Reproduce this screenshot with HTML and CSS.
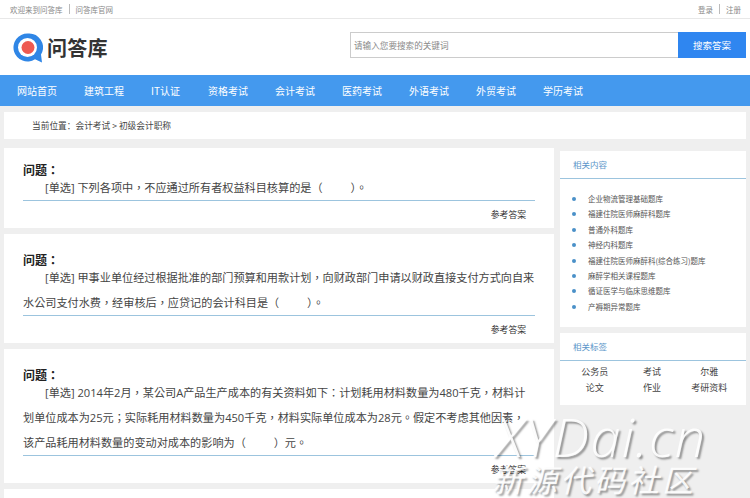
FILE: index.html
```html
<!DOCTYPE html>
<html lang="zh-CN">
<head>
    <meta charset="UTF-8">
    <meta name="viewport" content="width=device-width, initial-scale=1.0">
    <title>问答库</title>
    <link rel="stylesheet" href="styles.css">
</head>
<body>
    <div class="topbar">
        <div class="topbar-links">
            <a>欢迎来到问答库</a>
            <span class="sep"></span>
            <a>问答库官网</a>
        </div>
        <div class="topbar-links">
            <a>登录</a>
            <span class="sep"></span>
            <a>注册</a>
        </div>
    </div>

    <div class="header">
        <div class="logo">
            <svg class="logo-icon" width="30" height="30" viewBox="0 0 30 30">
                <path d="M14.5 0.5 a14 14 0 1 0 7.5 25.8 l7 3.2 l-1-8 a14 14 0 0 0 -13.500-21z" fill="#2f86e6"/>
                <circle cx="14.500" cy="14.500" r="9.500" fill="#fff"/>
                <circle cx="15" cy="14.500" r="6.500" fill="#ee5a52"/>
            </svg>
            <span class="logo-text">问答库</span>
        </div>
        <div class="search">
            <div class="search-input">请输入您要搜索的关键词</div>
            <button class="search-btn">搜索答案</button>
        </div>
    </div>

    <div class="nav">
        <a>网站首页</a>
        <a>建筑工程</a>
        <a class="short">IT认证</a>
        <a>资格考试</a>
        <a>会计考试</a>
        <a>医药考试</a>
        <a>外语考试</a>
        <a>外贸考试</a>
        <a>学历考试</a>
    </div>

    <div class="crumb">当前位置：会计考试 &gt; 初级会计职称</div>

    <div class="content">
        <div class="questions">
            <div class="card first">
                <div class="q-title">问题：</div>
                <div class="q-text">[单选] 下列各项中，不应通过所有者权益科目核算的是（&emsp;&emsp;&ensp;）。</div>
                <div class="q-answer">参考答案</div>
            </div>
            <div class="card">
                <div class="q-title">问题：</div>
                <div class="q-text">[单选] 甲事业单位经过根据批准的部门预算和用款计划，向财政部门申请以财政直接支付方式向自来水公司支付水费，经审核后，应贷记的会计科目是（&emsp;&emsp;&ensp;）。</div>
                <div class="q-answer">参考答案</div>
            </div>
            <div class="card">
                <div class="q-title">问题：</div>
                <div class="q-text">[单选] 2014年2月，某公司A产品生产成本的有关资料如下：计划耗用材料数量为480千克，材料计<br>划单位成本为25元；实际耗用材料数量为450千克，材料实际单位成本为28元。假定不考虑其他因素，<br>该产品耗用材料数量的变动对成本的影响为（&emsp;&emsp;&ensp;）元。</div>
                <div class="q-answer">参考答案</div>
            </div>
            <div class="card"></div>
        </div>

        <div class="sidebar">
            <div class="side-box">
                <div class="side-title">相关内容</div>
                <ul class="side-list">
                    <li>企业物流管理基础题库</li>
                    <li>福建住院医师麻醉科题库</li>
                    <li>普通外科题库</li>
                    <li>神经内科题库</li>
                    <li>福建住院医师麻醉科(综合练习)题库</li>
                    <li>麻醉学相关课程题库</li>
                    <li>循证医学与临床思维题库</li>
                    <li>产褥期异常题库</li>
                </ul>
            </div>
            <div class="side-box">
                <div class="side-title">相关标签</div>
                <div class="tags">
                    <a>公务员</a>
                    <a>考试</a>
                    <a>尔雅</a>
                    <a>论文</a>
                    <a>作业</a>
                    <a>考研资料</a>
                </div>
            </div>
        </div>
    </div>

    <div class="watermark">
        <div class="wm-en">XYDai.cn</div>
        <div class="wm-cn">新源代码社区</div>
    </div>
</body>
</html>
```

FILE: styles.css
```css
* {
    box-sizing: border-box;
}
html, body {
    height: 498px;
    overflow: hidden;
}
body {
    margin: 0;
    position: relative;
    font-family: "Noto Sans CJK SC", "Noto Sans", sans-serif;
    background: #efefef;
    color: #444;
}
.topbar {
    height: 19px;
    padding: 0 9px 0 10px;
    display: flex;
    justify-content: space-between;
    align-items: center;
    background: #fff;
    border-bottom: 1px solid #e8e8e8;
    font-size: 7.500px;
    color: #888;
}
.topbar-links {
    display: flex;
    align-items: center;
    gap: 6px;
}
.sep {
    width: 1px;
    height: 10px;
    background: #bbb;
}
.header {
    height: 56px;
    padding: 13px 4px 0 13px;
    display: flex;
    justify-content: space-between;
    align-items: flex-start;
    background: #fff;
}
.logo {
    display: flex;
    align-items: center;
    gap: 4px;
    margin-top: 1px;
}
.logo-text {
    font-size: 20px;
    line-height: 30px;
    font-weight: 700;
    color: #333;
    letter-spacing: 0.300px;
}
.search {
    display: flex;
    height: 26px;
}
.search-input {
    width: 328px;
    padding-left: 3px;
    border: 1px solid #ccc;
    border-right: none;
    font-size: 8.600px;
    line-height: 24px;
    color: #888;
}
.search-btn {
    width: 68px;
    border: none;
    padding: 0;
    background: #2f86f0;
    color: #fff;
    font-family: inherit;
    font-size: 9.500px;
}
.nav {
    height: 31px;
    padding-left: 17px;
    display: flex;
    align-items: center;
    gap: 27px;
    background: #4499ee;
    color: #fff;
    font-size: 10px;
}
.nav a {
    width: 40px;
}
.nav .short {
    width: 30px;
}
.crumb {
    height: 27px;
    margin: 6px 4px 0 4px;
    padding-left: 28px;
    background: #fff;
    font-size: 8.700px;
    line-height: 27px;
    color: #444;
}
.content {
    display: flex;
    align-items: flex-start;
    gap: 6px;
    margin: 9px 4px 0 4px;
}
.questions {
    width: 550px;
    display: flex;
    flex-direction: column;
    gap: 6px;
}
.card {
    min-height: 80px;
    padding: 18px 19px 0 19px;
    background: #fff;
}
.card.first {
    padding-top: 14px;
}
.q-title {
    font-family: "Noto Sans CJK TC", "Noto Sans CJK SC", sans-serif;
    font-feature-settings: "locl" 0;
    font-size: 12px;
    line-height: 16px;
    font-weight: 700;
    color: #222;
}
.q-text {
    margin-top: -3px;
    border-bottom: 1px solid #9cc4de;
    font-family: "Open Sans", "Noto Sans CJK TC", "Noto Sans CJK SC", sans-serif;
    font-feature-settings: "locl" 0;
    font-size: 11.150px;
    line-height: 25px;
    text-indent: 22px;
    color: #444;
}
.q-answer {
    height: 27px;
    padding-right: 9px;
    text-align: right;
    font-size: 8.800px;
    line-height: 27px;
    color: #333;
}
.sidebar {
    width: 186px;
    margin-top: 3px;
    display: flex;
    flex-direction: column;
    gap: 6px;
}
.side-box {
    background: #fff;
}
.side-title {
    height: 28px;
    padding-left: 13px;
    border-bottom: 1px solid #9cc4de;
    font-size: 8.500px;
    line-height: 27px;
    color: #5b95c9;
}
.side-list {
    list-style: none;
    margin: 0;
    padding: 12px 0 13px 28px;
}
.side-list li {
    position: relative;
    font-size: 7.500px;
    line-height: 15.400px;
    color: #555;
}
.side-list li::before {
    content: "";
    position: absolute;
    left: -16px;
    top: 6px;
    width: 4px;
    height: 4px;
    border-radius: 50%;
    background: #4a90c8;
}
.tags {
    padding: 3px 8px 9px 6px;
    display: grid;
    grid-template-columns: repeat(3, 1fr);
    text-align: center;
    font-size: 9px;
    line-height: 16px;
    color: #444;
}
.watermark {
    position: absolute;
    left: 492px;
    top: 404px;
    width: 230px;
    color: rgba(255, 255, 255, 0.92);
    text-shadow: 2px 2px 2px rgba(0, 0, 0, 0.4);
}
.wm-en {
    padding-left: 4px;
    font-family: "Open Sans", sans-serif;
    font-style: italic;
    font-size: 54px;
    line-height: 64px;
    font-weight: 300;
    letter-spacing: 1.400px;
}
.wm-cn {
    margin-top: -4px;
    font-size: 31px;
    line-height: 30px;
    letter-spacing: 3px;
    font-style: italic;
    font-weight: 400;
    white-space: nowrap;
}
```
